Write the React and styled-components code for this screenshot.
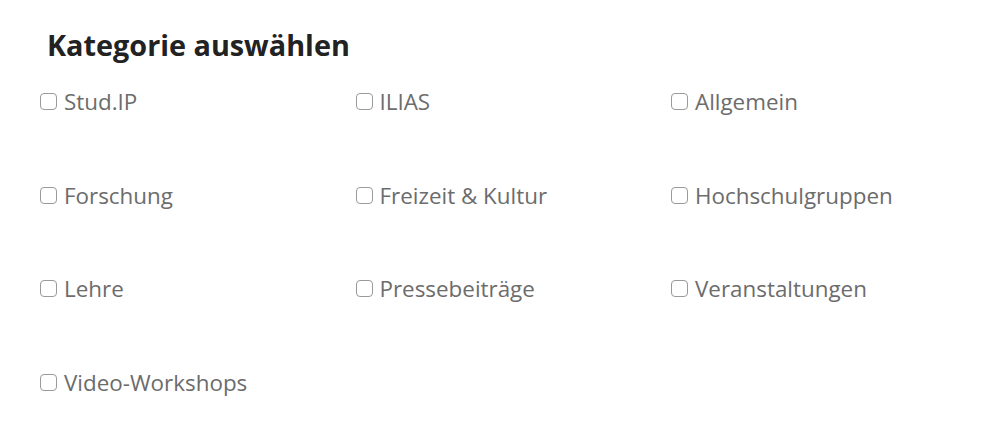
import React from 'react';
import styled, { createGlobalStyle } from 'styled-components';

const GlobalStyle = createGlobalStyle`
  body {
    margin: 0;
    background: #fff;
    font-family: 'Open Sans', 'Liberation Sans', sans-serif;
  }
`;

const Panel = styled.div`
  padding: 26px 0 0 40px;
`;

const Title = styled.h2`
  margin: 0 0 0 7px;
  font-size: 28.8px;
  font-weight: 700;
  color: #222;
  line-height: 38px;
`;

const Grid = styled.div`
  display: grid;
  grid-template-columns: repeat(3, 315.5px);
  grid-auto-rows: 30px;
  row-gap: 63.7px;
  margin-top: 23px;
`;

const Option = styled.label`
  display: flex;
  align-items: flex-start;
  gap: 7px;
  font-size: 22.4px;
  color: #6c6c6c;
  line-height: 30px;
  cursor: pointer;
`;

const Box = styled.input.attrs({ type: 'checkbox' })`
  appearance: none;
  margin: 6px 0 0 0;
  width: 17px;
  height: 17px;
  border: 1.5px solid #9a9a9a;
  border-radius: 4px;
  background: #fff;
  flex-shrink: 0;
`;

const categories = [
  'Stud.IP',
  'ILIAS',
  'Allgemein',
  'Forschung',
  'Freizeit & Kultur',
  'Hochschulgruppen',
  'Lehre',
  'Pressebeiträge',
  'Veranstaltungen',
  'Video-Workshops',
];

const App = () => (
  <>
    <GlobalStyle />
    <Panel>
      <Title>Kategorie auswählen</Title>
      <Grid>
        {categories.map((c) => (
          <Option key={c}>
            <Box />
            {c}
          </Option>
        ))}
      </Grid>
    </Panel>
  </>
);

export default App;
